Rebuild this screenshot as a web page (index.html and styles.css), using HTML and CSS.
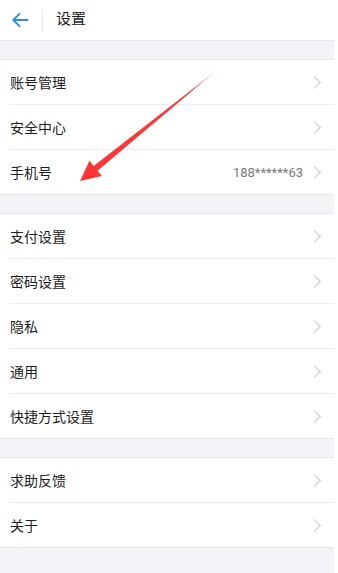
FILE: index.html
```html
<!DOCTYPE html>
<html lang="zh-CN">
<head>
<meta charset="utf-8">
<title>设置</title>
<link rel="stylesheet" href="styles.css">
</head>
<body>
<div class="page">
  <header class="topbar">
    <span class="back">
      <svg width="18" height="16" viewBox="0 0 18 16"><path d="M16.5 8H2.5M8.5 1.8L2.3 8l6.2 6.2" fill="none" stroke="#2b8de6" stroke-width="1.8" stroke-linecap="round" stroke-linejoin="round"/></svg>
    </span>
    <span class="vdiv"></span>
    <span class="title">设置</span>
  </header>
  <div class="gap"></div>
  <section class="group">
    <div class="row"><span class="label">账号管理</span><span class="chev"></span></div>
    <div class="row"><span class="label">安全中心</span><span class="chev"></span></div>
    <div class="row"><span class="label">手机号</span><span class="value">188******63</span><span class="chev"></span></div>
  </section>
  <div class="gap"></div>
  <section class="group">
    <div class="row"><span class="label">支付设置</span><span class="chev"></span></div>
    <div class="row"><span class="label">密码设置</span><span class="chev"></span></div>
    <div class="row"><span class="label">隐私</span><span class="chev"></span></div>
    <div class="row"><span class="label">通用</span><span class="chev"></span></div>
    <div class="row"><span class="label">快捷方式设置</span><span class="chev"></span></div>
  </section>
  <div class="gap"></div>
  <section class="group">
    <div class="row"><span class="label">求助反馈</span><span class="chev"></span></div>
    <div class="row"><span class="label">关于</span><span class="chev"></span></div>
  </section>
  <div class="tail"></div>
  <svg class="annot" width="338" height="573" viewBox="0 0 338 573">
    <defs>
      <linearGradient id="fade" x1="217" y1="70" x2="80" y2="181" gradientUnits="userSpaceOnUse">
        <stop offset="0" stop-color="#ff6a6a" stop-opacity="0.5"/>
        <stop offset="0.2" stop-color="#ff3a3a"/>
        <stop offset="1" stop-color="#ff3333"/>
      </linearGradient>
    </defs>
    <polygon points="217,70 97.5,170.7 101.8,176 80,181 89.5,160.8 93.7,166.1" fill="url(#fade)"/>
  </svg>
</div>
</body>
</html>
```
FILE: styles.css
```css
html, body {
  margin: 0;
  padding: 0;
  background: #ffffff;
}
body {
  font-family: "Noto Sans CJK SC", "Noto Sans", Roboto, sans-serif;
  color: #1c1c1c;
}
.page {
  position: relative;
  width: 334px;
  height: 573px;
  background: #f3f3f7;
  overflow: hidden;
  display: flex;
  flex-direction: column;
}
.topbar {
  height: 40px;
  background: #fff;
  border-bottom: 1px solid #e4e4e8;
  display: flex;
  align-items: center;
  flex-shrink: 0;
}
.back {
  width: 42px;
  display: flex;
  justify-content: flex-start;
  padding-left: 11px;
  box-sizing: border-box;
  align-items: center;
}
.back svg { display: block; }
.vdiv {
  width: 1px;
  height: 23px;
  background: #e6e6e6;
}
.title {
  margin-left: 13px;
  margin-bottom: 4px;
  font-size: 15px;
  line-height: 20px;
  color: #1e1e1e;
}
.gap {
  height: 18px;
  flex-shrink: 0;
}
.group {
  background: #fff;
  border-top: 1px solid #e6e6ea;
  border-bottom: 1px solid #e6e6ea;
  padding-left: 10px;
  flex-shrink: 0;
}
.row {
  height: 45px;
  display: flex;
  align-items: center;
  padding-right: 12px;
  box-sizing: border-box;
  border-bottom: 1px solid #ececec;
}
.row:last-child {
  border-bottom: none;
  height: 44px;
}
.label {
  flex: 1;
  font-size: 14px;
  color: #1c1c1c;
}
.value {
  font-family: Roboto, "Noto Sans", sans-serif;
  font-size: 13px;
  color: #7a7a7a;
  margin-right: 7px;
}
.chev {
  width: 8px;
  height: 8px;
  border-top: 1.3px solid #c2c2c2;
  border-right: 1.3px solid #c2c2c2;
  transform: rotate(45deg);
  margin-right: 3px;
}
.tail {
  flex: 1;
}
.annot {
  position: absolute;
  left: 0;
  top: 0;
  pointer-events: none;
}
```
